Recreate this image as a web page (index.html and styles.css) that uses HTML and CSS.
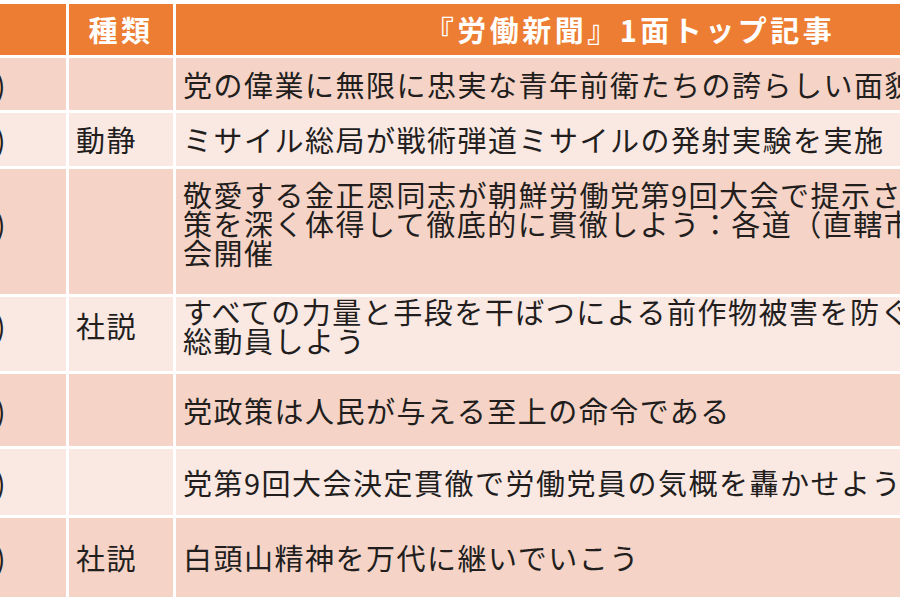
FILE: index.html
```html
<!DOCTYPE html>
<html lang="ja">
<head>
<meta charset="utf-8">
<title>労働新聞1面トップ記事</title>
<link rel="stylesheet" href="styles.css">
</head>
<body>
<div class="table">
  <div class="cell head c1"></div>
  <div class="cell head c2">種類</div>
  <div class="cell head c3">『労働新聞』1面トップ記事</div>

  <div class="cell odd c1">1日(木)</div>
  <div class="cell odd c2"></div>
  <div class="cell odd c3">党の偉業に無限に忠実な青年前衛たちの誇らしい面貌</div>

  <div class="cell even c1">2日(金)</div>
  <div class="cell even c2">動静</div>
  <div class="cell even c3">ミサイル総局が戦術弾道ミサイルの発射実験を実施</div>

  <div class="cell odd c1 multi">3日(土)</div>
  <div class="cell odd c2 multi"></div>
  <div class="cell odd c3 multi">敬愛する金正恩同志が朝鮮労働党第9回大会で提示された政<br>策を深く体得して徹底的に貫徹しよう：各道（直轄市）党委員会総<br>会開催</div>

  <div class="cell even c1 multi">4日(日)</div>
  <div class="cell even c2 multi">社説</div>
  <div class="cell even c3 multi">すべての力量と手段を干ばつによる前作物被害を防ぐための闘いに<br>総動員しよう</div>

  <div class="cell odd c1">5日(月)</div>
  <div class="cell odd c2"></div>
  <div class="cell odd c3">党政策は人民が与える至上の命令である</div>

  <div class="cell even c1">6日(火)</div>
  <div class="cell even c2"></div>
  <div class="cell even c3">党第9回大会決定貫徹で労働党員の気概を轟かせよう</div>

  <div class="cell odd c1">7日(水)</div>
  <div class="cell odd c2">社説</div>
  <div class="cell odd c3">白頭山精神を万代に継いでいこう</div>
</div>
</body>
</html>
```

FILE: styles.css
```css
html, body {
  margin: 0;
  padding: 0;
  background: #ffffff;
  overflow: hidden;
  width: 900px;
  height: 600px;
}

.table {
  display: grid;
  grid-template-columns: 216px 104px 908px;
  grid-template-rows: 51px 52px 53px 125px 74px 72px 66px 79px;
  gap: 3px;
  margin-left: -150px;
  padding-top: 4px;
  background: #ffffff;
  width: max-content;
  font-family: "Noto Sans CJK JP", "Noto Sans", sans-serif;
  font-size: 29px;
  letter-spacing: 1.5px;
  color: #221e1d;
}

.cell {
  display: flex;
  align-items: center;
  white-space: nowrap;
  overflow: hidden;
  box-sizing: border-box;
  line-height: 29px;
}

.head {
  background: #ec7d32;
  color: #ffffff;
  font-weight: 700;
  justify-content: center;
  letter-spacing: 3.5px;
}

.odd {
  background: #f5d3c7;
}

.even {
  background: #fae8e3;
}

.c1 {
  justify-content: flex-end;
  padding-right: 59px;
}

.head.c1 {
  padding-right: 0;
}

.c2 {
  padding-left: 7px;
}

.head.c2 {
  padding-left: 0;
}

.c3 {
  padding-left: 7px;
}

.head.c3 {
  padding-left: 0;
}

.multi {
  padding-bottom: 17px;
}
```
